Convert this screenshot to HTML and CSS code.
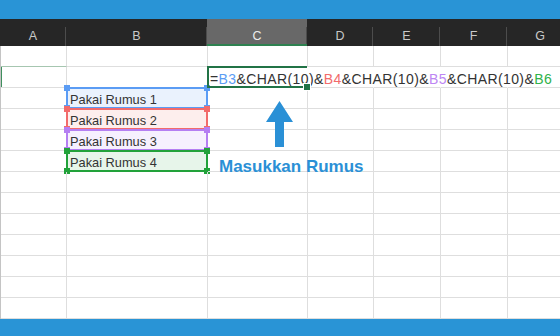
FILE: index.html
```html
<!DOCTYPE html>
<html lang="id">
<head>
  <meta charset="UTF-8" />
  <meta name="viewport" content="width=device-width, initial-scale=1.0"/>
  <title>Rumus CHAR(10)</title>
  <link rel="stylesheet" href="styles.css">
</head>
<body>

  <div class="topbar"></div>

  <div class="sheet">
    <div class="cols">
      <div class="col">A</div>
      <div class="col">B</div>
      <div class="col sel">C</div>
      <div class="col">D</div>
      <div class="col">E</div>
      <div class="col">F</div>
      <div class="col">G</div>
    </div>

    <div class="grid">
      <!-- row 1 -->
      <div class="cell above-hl"></div><div class="cell"></div><div class="cell"></div><div class="cell"></div><div class="cell"></div><div class="cell"></div><div class="cell"></div>
      <!-- row 2 -->
      <div class="cell hl"></div><div class="cell"></div>
      <div class="cell formula">=<span class="ref-blue">B3</span>&amp;CHAR(10)&amp;<span class="ref-red">B4</span>&amp;CHAR(10)&amp;<span class="ref-purple">B5</span>&amp;CHAR(10)&amp;<span class="ref-green">B6</span></div>
      <div class="cell spill"></div><div class="cell spill"></div><div class="cell spill"></div><div class="cell spill"></div>
      <!-- row 3 -->
      <div class="cell"></div><div class="cell rng blue">Pakai Rumus 1</div><div class="cell"></div><div class="cell"></div><div class="cell"></div><div class="cell"></div><div class="cell"></div>
      <!-- row 4 -->
      <div class="cell"></div><div class="cell rng red">Pakai Rumus 2</div><div class="cell"></div><div class="cell"></div><div class="cell"></div><div class="cell"></div><div class="cell"></div>
      <!-- row 5 -->
      <div class="cell"></div><div class="cell rng purple">Pakai Rumus 3</div><div class="cell"></div><div class="cell"></div><div class="cell"></div><div class="cell"></div><div class="cell"></div>
      <!-- row 6 -->
      <div class="cell"></div><div class="cell rng green">Pakai Rumus 4</div><div class="cell"></div><div class="cell"></div><div class="cell"></div><div class="cell"></div><div class="cell"></div>
      <!-- rows 7-13 -->
      <div class="cell"></div><div class="cell"></div><div class="cell"></div><div class="cell"></div><div class="cell"></div><div class="cell"></div><div class="cell"></div>
      <div class="cell"></div><div class="cell"></div><div class="cell"></div><div class="cell"></div><div class="cell"></div><div class="cell"></div><div class="cell"></div>
      <div class="cell"></div><div class="cell"></div><div class="cell"></div><div class="cell"></div><div class="cell"></div><div class="cell"></div><div class="cell"></div>
      <div class="cell"></div><div class="cell"></div><div class="cell"></div><div class="cell"></div><div class="cell"></div><div class="cell"></div><div class="cell"></div>
      <div class="cell"></div><div class="cell"></div><div class="cell"></div><div class="cell"></div><div class="cell"></div><div class="cell"></div><div class="cell"></div>
      <div class="cell"></div><div class="cell"></div><div class="cell"></div><div class="cell"></div><div class="cell"></div><div class="cell"></div><div class="cell"></div>
      <div class="cell"></div><div class="cell"></div><div class="cell"></div><div class="cell"></div><div class="cell"></div><div class="cell"></div><div class="cell"></div>
    </div>

    <div class="hint">
      <svg class="arrow" width="27" height="46" viewBox="0 0 27 46">
        <polygon points="13.5,0 27,21 18,21 18,46 9,46 9,21 0,21" fill="#2a90d6"/>
      </svg>
      <span class="hint-text">Masukkan Rumus</span>
    </div>
  </div>

  <div class="bottombar"></div>

</body>
</html>
```

FILE: styles.css
```css
* {
  box-sizing: border-box;
}

body {
  margin: 0;
  width: 560px;
  height: 336px;
  overflow: hidden;
  background: #ffffff;
  font-family: "Liberation Sans", Arial, sans-serif;
  display: flex;
  flex-direction: column;
}

.topbar {
  height: 19px;
  background: #2994d6;
  flex-shrink: 0;
}

.bottombar {
  flex: 1;
  background: #2994d6;
}

.sheet {
  position: relative;
  overflow: hidden;
  flex-shrink: 0;
}

/* column headers */
.cols,
.grid {
  display: grid;
  grid-template-columns: 66px 141px 100px 66px 67px 67px 66px;
}

.cols {
  height: 27px;
  background: #262626;
}

.col {
  position: relative;
  color: #c9c9c9;
  font-size: 12.5px;
  text-align: center;
  padding-top: 9px;
  line-height: 16px;
}

.col::after {
  content: "";
  position: absolute;
  right: 0;
  top: 8px;
  bottom: 0;
  width: 1px;
  background: #4c4c4c;
}

.col.sel {
  background: #686868;
  color: #ececec;
  border-bottom: 2px solid #2e8150;
}

/* cells */
.grid {
  grid-auto-rows: 21px;
  border-left: 1px solid #c4c4c4;
}

.cell {
  position: relative;
  border-right: 1px solid #dedede;
  border-bottom: 1px solid #dedede;
  font-size: 12.8px;
  color: #333333;
  line-height: 20px;
  padding: 2px 0 0 3px;
  white-space: nowrap;
}

.cell.above-hl {
  border-bottom-color: #a6c6b0;
}

.cell.hl {
  box-shadow: inset 1px 0 0 #3f8f5e;
}

.cell.spill {
  border-right-color: transparent;
}

/* selected cell with the formula */
.formula {
  overflow: visible;
  z-index: 2;
  font-size: 14px;
  letter-spacing: 0.4px;
  padding-left: 2px;
  border-right-color: transparent;
}

.formula::before {
  content: "";
  position: absolute;
  left: -1px;
  top: -1px;
  right: 0;
  bottom: -1px;
  border: 2px solid #217346;
  border-right: none;
}

.formula::after {
  content: "";
  position: absolute;
  right: -4px;
  bottom: -4px;
  width: 6px;
  height: 6px;
  background: #217346;
  border: 1px solid #ffffff;
}

.ref-blue { color: #5b9cf4; }
.ref-red { color: #f26b6b; }
.ref-purple { color: #bd86f3; }
.ref-green { color: #2fb24a; }

/* coloured reference ranges */
.rng::before {
  content: "";
  position: absolute;
  left: -1px;
  top: -1px;
  right: -1px;
  bottom: -1px;
  border: 2px solid var(--c);
}

.rng::after {
  content: "";
  position: absolute;
  left: -3px;
  top: -3px;
  right: -3px;
  bottom: -3px;
  background:
    linear-gradient(var(--c), var(--c)) left top / 6px 6px no-repeat,
    linear-gradient(var(--c), var(--c)) right top / 6px 6px no-repeat,
    linear-gradient(var(--c), var(--c)) left bottom / 6px 6px no-repeat,
    linear-gradient(var(--c), var(--c)) right bottom / 6px 6px no-repeat;
}

.rng.blue { --c: #5b9cf4; background: #eaf2fd; }
.rng.red { --c: #f26b6b; background: #fdeeed; }
.rng.purple { --c: #b57ff2; background: #f6f0fe; }
.rng.green { --c: #22a23a; background: #e7f5ea; }

/* arrow + label */
.hint {
  position: absolute;
  left: 219px;
  top: 82px;
  display: flex;
  flex-direction: column;
  align-items: flex-start;
}

.arrow {
  margin-left: 47px;
  display: block;
}

.hint-text {
  margin-top: 10px;
  font-size: 17px;
  font-weight: bold;
  line-height: 20px;
  color: #2a90d6;
}
```
